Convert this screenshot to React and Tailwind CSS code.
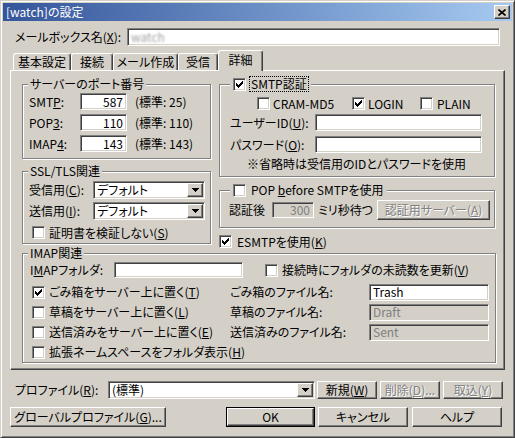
import React from 'react';

// classic 3D edges
const sunken =
  'border border-t-[#808080] border-l-[#808080] border-r-white border-b-white shadow-[inset_1px_1px_0_#404040,inset_-1px_-1px_0_#d4d0c8]';
const raised =
  'border border-t-white border-l-white border-r-[#404040] border-b-[#404040] shadow-[inset_-1px_-1px_0_#808080]';
const grayText = 'text-[#808080] [text-shadow:1px_1px_0_#fff]';

function U({ children }) {
  return <span className="underline underline-offset-[1px]">{children}</span>;
}

function CheckMark() {
  return (
    <svg width="7" height="7" viewBox="0 0 7 7" shapeRendering="crispEdges">
      <rect x="6" y="0" width="1" height="1" />
      <rect x="5" y="1" width="2" height="1" />
      <rect x="0" y="2" width="1" height="1" />
      <rect x="4" y="2" width="3" height="1" />
      <rect x="0" y="3" width="2" height="1" />
      <rect x="3" y="3" width="3" height="1" />
      <rect x="0" y="4" width="5" height="1" />
      <rect x="1" y="5" width="3" height="1" />
      <rect x="2" y="6" width="1" height="1" />
    </svg>
  );
}

function Check({ checked }) {
  return (
    <span className={`${sunken} bg-white w-[13px] h-[13px] shrink-0 flex items-center justify-center`}>
      {checked && <CheckMark />}
    </span>
  );
}

function Arrow() {
  return (
    <svg width="7" height="4" viewBox="0 0 7 4" shapeRendering="crispEdges">
      <rect x="0" y="0" width="7" height="1" />
      <rect x="1" y="1" width="5" height="1" />
      <rect x="2" y="2" width="3" height="1" />
      <rect x="3" y="3" width="1" height="1" />
    </svg>
  );
}

function Field({ className = '', value = '', disabled, right }) {
  return (
    <div
      className={`${sunken} ${disabled ? 'bg-[#d4d0c8] text-[#808080]' : 'bg-white'} flex items-center px-[3px] shrink-0 overflow-hidden ${
        right ? 'justify-end' : ''
      } ${className}`}
    >
      {value}
    </div>
  );
}

function Combo({ className = '', value }) {
  return (
    <div className={`${sunken} bg-white flex items-stretch p-[1px] shrink-0 ${className}`}>
      <span className="flex-1 flex items-center pl-[2px]">{value}</span>
      <span className={`${raised} bg-[#d4d0c8] w-[16px] flex items-center justify-center`}>
        <Arrow />
      </span>
    </div>
  );
}

function Btn({ className = '', children, disabled, isDefault }) {
  const face = (
    <div className={`${raised} bg-[#d4d0c8] h-full flex items-center justify-center ${disabled ? grayText : ''}`}>
      {children}
    </div>
  );
  if (isDefault) {
    return <div className={`border border-black shrink-0 ${className}`}>{face}</div>;
  }
  return <div className={`shrink-0 ${className}`}>{face}</div>;
}

function Group({ className = '', title, checkTitle, children }) {
  return (
    <div className={`relative border border-[#808080] shadow-[inset_1px_1px_0_#fff,1px_1px_0_#fff] ${className}`}>
      <div
        className={`absolute -top-[9px] h-[16px] bg-[#d4d0c8] flex items-center ${
          checkTitle ? 'left-[10px] px-[3px] gap-[4px]' : 'left-[5px] px-[2px]'
        }`}
      >
        {title}
      </div>
      {children}
    </div>
  );
}

function Tab({ label, w, active }) {
  return (
    <div
      style={{ width: w }}
      className={`border-t border-l border-t-white border-l-white border-r border-r-[#404040] shadow-[inset_-1px_0_0_#808080] rounded-t-[3px] bg-[#d4d0c8] flex items-center justify-center shrink-0 ${
        active ? 'h-[21px] -mb-px relative z-10 pb-[3px]' : 'h-[17px]'
      }`}
    >
      {label}
    </div>
  );
}

export default function App() {
  return (
    <div className="w-[515px] h-[438px] bg-[#d4d0c8] border border-t-[#d4d0c8] border-l-[#d4d0c8] border-r-[#404040] border-b-[#404040] shadow-[inset_1px_1px_0_#fff,inset_-1px_-1px_0_#808080] p-[2px] flex flex-col text-[12px] leading-none text-black font-['Noto_Sans_CJK_JP',sans-serif] [font-feature-settings:'palt'] whitespace-nowrap overflow-hidden select-none">
      {/* title bar */}
      <div className="h-[18px] bg-linear-to-r from-[#35559a] to-[#a6caf0] flex items-center justify-between pl-[3px] pr-[2px] shrink-0">
        <span className="text-white">[watch]の設定</span>
        <div className={`${raised} bg-[#d4d0c8] w-[16px] h-[14px] flex items-center justify-center`}>
          <svg width="8" height="7" viewBox="0 0 8 7">
            <path d="M0.5 0.5L7.5 6.5M7.5 0.5L0.5 6.5" stroke="#000" strokeWidth="1.6" />
          </svg>
        </div>
      </div>

      {/* mailbox name */}
      <div className="mt-[7px] h-[18px] flex items-center pl-[12px] shrink-0">
        <span className="w-[112px]">
          メールボックス名(<U>X</U>):
        </span>
        <Field className="w-[373px] h-[18px]" value={<span className="text-[#a0a0a0] blur-[1px]">watch</span>} />
      </div>

      {/* tabs */}
      <div className="mt-[4px] h-[20px] flex items-end pl-[10px] shrink-0">
        <Tab label="基本設定" w={58} />
        <Tab label="接続" w={42} />
        <Tab label="メール作成" w={65} />
        <Tab label="受信" w={40} />
        <Tab label="詳細" w={45} active />
      </div>

      {/* panel */}
      <div className="ml-[7px] w-[495px] h-[300px] border border-t-white border-l-white border-r-[#404040] border-b-[#404040] shadow-[inset_-1px_-1px_0_#808080] pt-[13px] pl-[11px] shrink-0">
        <div className="flex h-[169px]">
          {/* left column */}
          <div className="w-[189px] flex flex-col">
            <Group className="h-[75px] pt-[8px]" title="サーバーのポート番号">
              <div className="flex flex-col gap-[4px]">
                {[
                  [<>SMT<U>P</U>:</>, '587', '(標準: 25)'],
                  [<>POP<U>3</U>:</>, '110', '(標準: 110)'],
                  [<>IMAP<U>4</U>:</>, '143', '(標準: 143)'],
                ].map(([label, val, std], i) => (
                  <div key={i} className="h-[17px] flex items-center">
                    <span className="w-[57px] pl-[6px]">{label}</span>
                    <Field className="w-[47px] h-[17px]" value={val} right />
                    <span className="ml-[8px]">{std}</span>
                  </div>
                ))}
              </div>
            </Group>

            <Group className="mt-[12px] h-[73px] pt-[9px]" title="SSL/TLS関連">
              <div className="h-[18px] flex items-center">
                <span className="w-[70px] pl-[6px]">
                  受信用(<U>C</U>):
                </span>
                <Combo className="w-[112px] h-[18px]" value="デフォルト" />
              </div>
              <div className="mt-[3px] h-[18px] flex items-center">
                <span className="w-[70px] pl-[6px]">
                  送信用(<U>I</U>):
                </span>
                <Combo className="w-[112px] h-[18px]" value="デフォルト" />
              </div>
              <div className="mt-[6px] h-[13px] pl-[9px] flex items-center gap-[4px]">
                <Check />
                <span>
                  証明書を検証しない(<U>S</U>)
                </span>
              </div>
            </Group>
          </div>

          {/* right column */}
          <div className="ml-[8px] w-[276px] flex flex-col">
            <Group
              className="h-[93px] pt-[12px]"
              checkTitle
              title={
                <>
                  <Check checked />
                  <span className="outline-1 outline-dotted outline-black px-[1px] py-[1px]">SMTP認証</span>
                </>
              }
            >
              <div className="h-[13px] pl-[37px] flex items-center">
                <div className="w-[95px] flex items-center gap-[3px]">
                  <Check />
                  <span>CRAM-MD5</span>
                </div>
                <div className="w-[68px] flex items-center gap-[3px]">
                  <Check checked />
                  <span>LOGIN</span>
                </div>
                <div className="flex items-center gap-[4px]">
                  <Check />
                  <span>PLAIN</span>
                </div>
              </div>
              <div className="mt-[4px] h-[17px] flex items-center">
                <span className="w-[95px] pl-[10px]">
                  ユーザーID(<U>U</U>):
                </span>
                <Field className="w-[167px] h-[17px]" />
              </div>
              <div className="mt-[5px] h-[17px] flex items-center">
                <span className="w-[95px] pl-[10px]">
                  パスワード(<U>O</U>):
                </span>
                <Field className="w-[167px] h-[17px]" />
              </div>
              <div className="mt-[3px] h-[16px] pl-[27px] flex items-center">※省略時は受信用のIDとパスワードを使用</div>
            </Group>

            <Group
              className="mt-[13px] h-[38px] pt-[9px]"
              checkTitle
              title={
                <>
                  <Check />
                  <span className="ml-[1px]">
                    POP <U>b</U>efore SMTPを使用
                  </span>
                </>
              }
            >
              <div className="h-[20px] flex items-center pl-[9px]">
                <span className="w-[43px]">認証後</span>
                <Field className="w-[42px] h-[16px]" value="300" right disabled />
                <span className="ml-[4px] w-[59px]">ミリ秒待つ</span>
                <Btn className="w-[113px] h-[20px]" disabled>
                  認証用サーバー(<U>A</U>)
                </Btn>
              </div>
            </Group>

            <div className="mt-[7px] h-[13px] flex items-center gap-[5px]">
              <Check checked />
              <span>
                ESMTPを使用(<U>K</U>)
              </span>
            </div>
          </div>
        </div>

        {/* IMAP */}
        <Group className="w-[474px] h-[110px] pt-[8px]" title="IMAP関連">
          <div className="h-[16px] flex items-center">
            <span className="w-[91px] pl-[7px]">
              I<U>M</U>APフォルダ:
            </span>
            <Field className="w-[129px] h-[16px]" />
            <div className="ml-[22px] flex items-center gap-[4px]">
              <Check />
              <span>
                接続時にフォルダの未読数を更新(<U>V</U>)
              </span>
            </div>
          </div>
          <div className="mt-[4px] flex flex-col">
            {[
              ['ごみ箱をサーバー上に置く', 'T', true, 'ごみ箱のファイル名:', 'Trash', false],
              ['草稿をサーバー上に置く', 'L', false, '草稿のファイル名:', 'Draft', true],
              ['送信済みをサーバー上に置く', 'E', false, '送信済みのファイル名:', 'Sent', true],
              ['拡張ネームスペースをフォルダ表示', 'H', false, null, null, false],
            ].map(([text, key, checked, label, val, dis], i) => (
              <div key={i} className="h-[20px] flex items-center">
                <div className="w-[207px] pl-[9px] flex items-center gap-[4px]">
                  <Check checked={checked} />
                  <span>
                    {text}(<U>{key}</U>)
                  </span>
                </div>
                {label && (
                  <>
                    <span className="w-[139px]">{label}</span>
                    <Field className="w-[120px] h-[17px]" value={val} disabled={dis} />
                  </>
                )}
              </div>
            ))}
          </div>
        </Group>
      </div>

      {/* profile row */}
      <div className="mt-[11px] h-[18px] flex items-center pl-[12px] shrink-0">
        <span className="w-[93px]">
          プロファイル(<U>R</U>):
        </span>
        <Combo className="w-[207px] h-[18px]" value="(標準)" />
        <Btn className="ml-[2px] w-[60px] h-[18px]">
          新規(<U>W</U>)
        </Btn>
        <Btn className="ml-[3px] w-[60px] h-[18px]" disabled>
          削除(<U>D</U>)...
        </Btn>
        <Btn className="ml-[3px] w-[60px] h-[18px]" disabled>
          取込(<U>Y</U>)
        </Btn>
      </div>

      {/* buttons */}
      <div className="mt-[8px] h-[20px] flex pl-[7px] shrink-0">
        <Btn className="w-[156px] h-[20px]">
          グローバルプロファイル(<U>G</U>)...
        </Btn>
        <Btn className="ml-[60px] w-[89px] h-[20px]" isDefault>
          OK
        </Btn>
        <Btn className="ml-[3px] w-[90px] h-[20px]">キャンセル</Btn>
        <Btn className="ml-[4px] w-[90px] h-[20px]">ヘルプ</Btn>
      </div>
    </div>
  );
}
